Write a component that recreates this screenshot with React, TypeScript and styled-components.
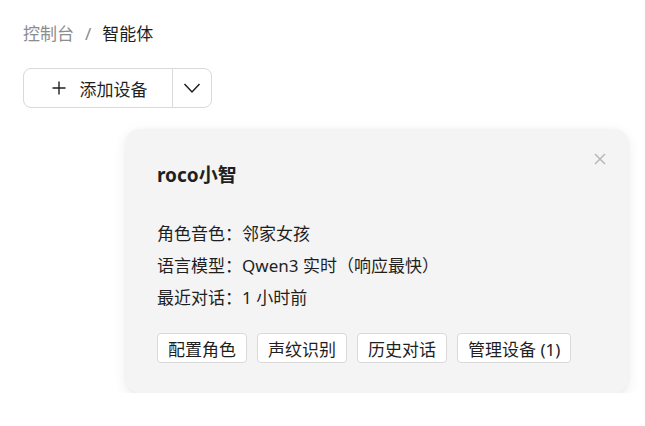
import React from "react";
import styled, { createGlobalStyle } from "styled-components";

const Global = createGlobalStyle`
  html, body { margin: 0; padding: 0; background: #fff; }
  body { font-family: "Noto Sans", "Noto Sans CJK SC", sans-serif; color: #1f1f1f; }
  * { box-sizing: border-box; }
`;

const Page = styled.div`
  padding: 22px 23px 0 23px;
  display: flex;
  flex-direction: column;
`;

const Breadcrumb = styled.nav`
  display: flex;
  align-items: center;
  gap: 11px;
  font-size: 17px;
  line-height: 24px;
`;

const Crumb = styled.span<{ $current?: boolean }>`
  color: ${(p) => (p.$current ? "#1f1f1f" : "#8c8c8c")};
`;

const Sep = styled.span`
  color: #8c8c8c;
`;

const SplitButton = styled.div`
  margin-top: 22px;
  display: flex;
  width: 189px;
  height: 40px;
  border: 1px solid #d9d9d9;
  border-radius: 8px;
  background: #fff;
  overflow: hidden;
`;

const MainPart = styled.button`
  flex: 1;
  display: flex;
  align-items: center;
  justify-content: center;
  gap: 13px;
  border: none;
  background: transparent;
  font: inherit;
  font-size: 17px;
  color: #1f1f1f;
  padding: 0 0 0 2px;
`;

const ArrowPart = styled.button`
  width: 39px;
  display: flex;
  align-items: center;
  justify-content: center;
  border: none;
  border-left: 1px solid #d9d9d9;
  background: transparent;
  padding: 0;
`;

const CardWrap = styled.div`
  margin-top: 21px;
  margin-left: 103px;
`;

const Card = styled.div`
  position: relative;
  width: 502px;
  height: 264px;
  background: #f4f4f4;
  border-radius: 14px;
  box-shadow: 0 4px 14px rgba(0, 0, 0, 0.08), 0 1px 4px rgba(0, 0, 0, 0.04);
  padding: 32px 32px 0 31px;
  display: flex;
  flex-direction: column;
`;

const Close = styled.button`
  position: absolute;
  top: 22px;
  right: 20px;
  width: 16px;
  height: 16px;
  padding: 0;
  border: none;
  background: transparent;
  display: flex;
  align-items: center;
  justify-content: center;
`;

const Title = styled.div`
  font-size: 19px;
  font-weight: 700;
  line-height: 28px;
  color: #1f1f1f;
`;

const Info = styled.div`
  margin-top: 29px;
  display: flex;
  flex-direction: column;
`;

const Row = styled.div`
  font-size: 17px;
  line-height: 32px;
  color: #1f1f1f;
`;

const Actions = styled.div`
  margin-top: 19px;
  display: flex;
  gap: 10px;
`;

const ActionBtn = styled.button`
  height: 30px;
  padding: 0 10px;
  border: 1px solid #d9d9d9;
  border-radius: 4px;
  background: #fff;
  font: inherit;
  font-size: 17px;
  color: #1f1f1f;
  display: flex;
  align-items: center;
`;

export default function App() {
  return (
    <>
      <Global />
      <Page>
        <Breadcrumb>
          <Crumb>控制台</Crumb>
          <Sep>/</Sep>
          <Crumb $current>智能体</Crumb>
        </Breadcrumb>
        <SplitButton>
          <MainPart>
            <svg width="16" height="16" viewBox="0 0 16 16">
              <path d="M8 1.5v13M1.5 8h13" stroke="#1f1f1f" strokeWidth="1.4" fill="none" />
            </svg>
            添加设备
          </MainPart>
          <ArrowPart>
            <svg width="18" height="12" viewBox="0 0 18 12">
              <path d="M1.5 2l7.5 8 7.5-8" stroke="#1f1f1f" strokeWidth="1.5" fill="none" />
            </svg>
          </ArrowPart>
        </SplitButton>
        <CardWrap>
          <Card>
            <Close>
              <svg width="14" height="14" viewBox="0 0 14 14">
                <path d="M2 2l10 10M12 2L2 12" stroke="#b8b8b8" strokeWidth="1.5" fill="none" />
              </svg>
            </Close>
            <Title>roco小智</Title>
            <Info>
              <Row>角色音色：邻家女孩</Row>
              <Row>语言模型：Qwen3 实时（响应最快）</Row>
              <Row>最近对话：1 小时前</Row>
            </Info>
            <Actions>
              <ActionBtn>配置角色</ActionBtn>
              <ActionBtn>声纹识别</ActionBtn>
              <ActionBtn>历史对话</ActionBtn>
              <ActionBtn>管理设备 (1)</ActionBtn>
            </Actions>
          </Card>
        </CardWrap>
      </Page>
    </>
  );
}
